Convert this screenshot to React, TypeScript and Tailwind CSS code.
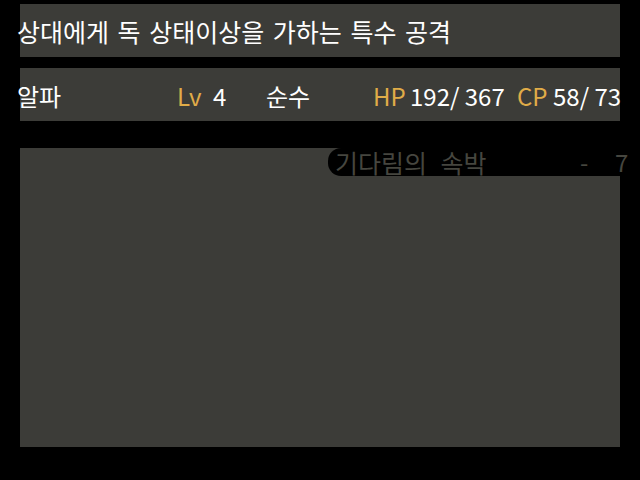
const font = { fontFamily: '"Noto Sans CJK KR", "Noto Sans", sans-serif' }

export default function App() {
	return (
		<div
			className="flex h-[480px] w-[640px] flex-col overflow-hidden bg-black pt-[4px] text-[24px] leading-none text-white"
			style={font}
		>
			{/* description bar */}
			<div className="ml-[20px] flex h-[53px] w-[600px] shrink-0 items-center bg-[#3c3c38] pt-[2px]">
				<span className="-ml-[3px] whitespace-pre text-[25px] [word-spacing:3px]">
					상대에게 독 상태이상을 가하는 특수 공격
				</span>
			</div>

			{/* status bar */}
			<div className="ml-[20px] mt-[11px] flex h-[53px] w-[600px] shrink-0 items-center bg-[#3c3c38] pt-[2px]">
				<div className="-ml-[3px] flex whitespace-pre">
					<span className="w-[160px] shrink-0">알파</span>
					<span className="w-[36px] shrink-0 text-[#e0ac48]">Lv</span>
					<span className="w-[53px] shrink-0">4</span>
					<span className="w-[107px] shrink-0">순수</span>
					<span className="w-[37px] shrink-0 text-[#e0ac48]">HP</span>
					<span className="w-[107px] shrink-0">192/ 367</span>
					<span className="w-[36px] shrink-0 text-[#e0ac48]">CP</span>
					<span className="shrink-0">58/ 73</span>
				</div>
			</div>

			{/* skill list */}
			<div className="ml-[20px] mt-[27px] flex h-[28px] w-[620px] shrink-0 bg-[#3c3c38]">
				<div className="w-[308px] shrink-0" />
				<div className="flex flex-1 items-center rounded-l-[13px] bg-black pl-[7px] text-[#46463f] whitespace-pre">
					<span className="w-[245px] shrink-0 text-[25px] [word-spacing:8px]">기다림의 속박</span>
					<span className="w-[35px] shrink-0">-</span>
					<span>7</span>
				</div>
			</div>
			<div className="ml-[20px] h-[271px] w-[600px] shrink-0 bg-[#3c3c38]" />
		</div>
	)
}
